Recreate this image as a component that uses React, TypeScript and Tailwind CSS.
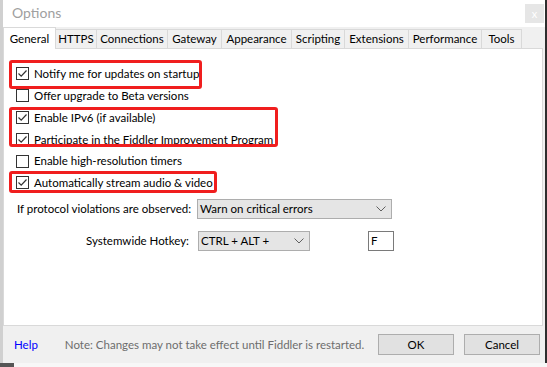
import { ChevronDown } from "lucide-react";

const tabs = [
  { name: "General", w: "w-[53px]" },
  { name: "HTTPS", w: "w-[41px]" },
  { name: "Connections", w: "w-[71px]" },
  { name: "Gateway", w: "w-[54px]" },
  { name: "Appearance", w: "w-[70px]" },
  { name: "Scripting", w: "w-[53px]" },
  { name: "Extensions", w: "w-[64px]" },
  { name: "Performance", w: "w-[73px]" },
  { name: "Tools", w: "w-[40px]" },
];

const options = [
  { label: "Notify me for updates on startup", checked: true },
  { label: "Offer upgrade to Beta versions", checked: false },
  { label: "Enable IPv6 (if available)", checked: true },
  { label: "Participate in the Fiddler Improvement Program", checked: true },
  { label: "Enable high-resolution timers", checked: false },
  { label: "Automatically stream audio & video", checked: true },
];

const CheckBox = ({ checked }: { checked: boolean }) => (
  <span className="w-[13px] h-[13px] border border-[#333333] bg-white flex items-center justify-center shrink-0">
    {checked && (
      <svg width="11" height="11" viewBox="0 0 11 11">
        <path d="M1.5 5.5 L4.2 8.2 L9.5 2.5" fill="none" stroke="#333333" strokeWidth="1.2" />
      </svg>
    )}
  </span>
);

const Select = ({ text, w }: { text: string; w: string }) => (
  <div className={`${w} h-[20px] bg-[#e5e5e5] border border-[#adadad] flex items-center justify-between pl-[2px] pr-[5px]`}>
    <span className="whitespace-nowrap">{text}</span>
    <svg width="10" height="6" viewBox="0 0 10 6">
      <path d="M0.5 0.5 L5 5 L9.5 0.5" fill="none" stroke="#606060" strokeWidth="1" />
    </svg>
  </div>
);

const OptionsDialog = () => {
  return (
    <div className="w-[547px] h-[367px] bg-[#3c3c3c] flex flex-col overflow-hidden text-[11.5px] text-black whitespace-nowrap" style={{ fontFamily: 'Lato, "Noto Sans", sans-serif' }}>
      <div className="flex">
        <div className="relative w-[545px] h-[363px] bg-[#f0f0f0] border-l-[3px] border-[#d0d0d0] flex flex-col">
          {/* title bar */}
          <div className="h-[27px] bg-white flex items-start justify-between">
            <span className="text-[14px] text-[#a0a0a0] pl-[9px] pt-[3px] leading-[20px]">Options</span>
            <div className="w-[19px] h-[19px] mt-[4px] mr-[1px] bg-[#e6e6e6] text-white text-[11px] leading-[19px] text-center">x</div>
          </div>

          {/* tabs */}
          <div className="h-[21px] flex items-end">
            {tabs.map((t, i) =>
              i === 0 ? (
                <div key={t.name} className={`${t.w} h-[22px] -mb-[1px] relative z-10 bg-white border border-b-0 border-[#d9d9d9] flex items-center justify-center leading-none`}>
                  {t.name}
                </div>
              ) : (
                <div key={t.name} className={`${t.w} h-[19px] bg-[#f0f0f0] border border-l-0 border-b-0 border-[#d9d9d9] flex items-center justify-center leading-none`}>
                  {t.name}
                </div>
              )
            )}
          </div>

          {/* panel */}
          <div className="w-[540px] h-[278px] bg-white border border-[#d9d9d9] pt-[14px] pl-[12px]">
            <div className="flex flex-col">
              {options.map((o) => (
                <div key={o.label} className="h-[21.8px] flex items-center gap-[5px]">
                  <CheckBox checked={o.checked} />
                  <span>{o.label}</span>
                </div>
              ))}
            </div>
            <div className="mt-[5px] flex items-center">
              <span className="pl-[1px] w-[181px]">If protocol violations are observed:</span>
              <Select text="Warn on critical errors" w="w-[195px]" />
            </div>
            <div className="mt-[12px] flex items-center">
              <span className="w-[173px] text-right">Systemwide Hotkey:</span>
              <div className="ml-[9px]">
                <Select text="CTRL + ALT +" w="w-[112px]" />
              </div>
              <div className="ml-[58px] w-[26px] h-[20px] bg-white border border-[#7a7a7a] flex items-center pl-[2px]">F</div>
            </div>
          </div>

          {/* footer */}
          <div className="flex-1 flex items-center pl-[11px] pr-[5px]">
            <span className="text-[#0000ff]">Help</span>
            <span className="ml-[27px] text-[#6d6d6d]">Note: Changes may not take effect until Fiddler is restarted.</span>
            <div className="ml-auto flex gap-[10px]">
              <button className="w-[76px] h-[21px] bg-[#e1e1e1] border border-[#adadad]">OK</button>
              <button className="w-[76px] h-[21px] bg-[#e1e1e1] border border-[#adadad]">Cancel</button>
            </div>
          </div>

          {/* red annotation boxes */}
          <div className="absolute left-[6px] top-[60px] w-[193px] h-[29px] border-[3px] border-[#f01e1e] rounded-[3px]" />
          <div className="absolute left-[6px] top-[107px] w-[269px] h-[40px] border-[3px] border-[#f01e1e] rounded-[3px]" />
          <div className="absolute left-[6px] top-[171px] w-[208px] h-[22px] border-[3px] border-[#f01e1e] rounded-[3px]" />
        </div>
        <div className="flex-1 bg-[#2e2e2e]" />
      </div>
      <div className="flex-1 bg-[#f7f7f7] flex">
        <div className="w-[14px] bg-[#555]" />
      </div>
    </div>
  );
};

export default function App() {
  return <OptionsDialog />;
}
